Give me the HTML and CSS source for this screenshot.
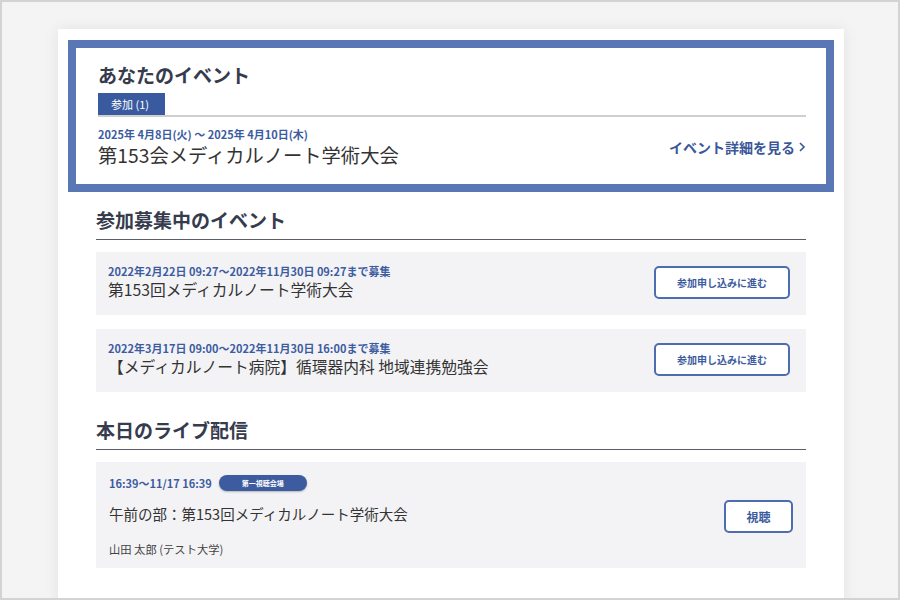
FILE: index.html
```html
<!DOCTYPE html>
<html lang="ja">
<head>
    <meta charset="UTF-8">
    <title>イベント</title>
    <link rel="stylesheet" href="styles.css">
</head>
<body>
    <div class="frame">
        <div class="card">
            <div class="my-events">
                <h2 class="my-title">あなたのイベント</h2>
                <div class="tabs">
                    <span class="tab">参加 (1)</span>
                </div>
                <div class="my-row">
                    <div>
                        <div class="date">2025年 4月8日(火) 〜 2025年 4月10日(木)</div>
                        <div class="my-name">第153会メディカルノート学術大会</div>
                    </div>
                    <a href="#" class="detail-link">イベント詳細を見る
                        <svg width="8" height="12" viewBox="0 0 8 12"><path d="M2 2l4 4-4 4" fill="none" stroke="currentColor" stroke-width="1.6"/></svg>
                    </a>
                </div>
            </div>

            <div class="section">
                <h3 class="section-title">参加募集中のイベント</h3>
                <div class="event-row">
                    <div>
                        <div class="date">2022年2月22日 09:27〜2022年11月30日 09:27まで募集</div>
                        <div class="event-name">第153回メディカルノート学術大会</div>
                    </div>
                    <button class="btn btn-apply">参加申し込みに進む</button>
                </div>
                <div class="event-row">
                    <div>
                        <div class="date">2022年3月17日 09:00〜2022年11月30日 16:00まで募集</div>
                        <div class="event-name">【メディカルノート病院】循環器内科 地域連携勉強会</div>
                    </div>
                    <button class="btn btn-apply">参加申し込みに進む</button>
                </div>
            </div>

            <div class="section live">
                <h3 class="section-title">本日のライブ配信</h3>
                <div class="live-row">
                    <div>
                        <div class="live-time">
                            <span class="date">16:39〜11/17 16:39</span>
                            <span class="badge">第一視聴会場</span>
                        </div>
                        <div class="live-name">午前の部：第153回メディカルノート学術大会</div>
                        <div class="speaker">山田 太郎 (テスト大学)</div>
                    </div>
                    <button class="btn btn-watch">視聴</button>
                </div>
            </div>
        </div>
    </div>
</body>
</html>
```

FILE: styles.css
```css
body {
    margin: 0;
    font-family: "Noto Sans CJK JP", "Noto Sans", sans-serif;
    color: #333;
}

.frame {
    box-sizing: border-box;
    height: 600px;
    overflow: hidden;
    background-color: #f4f4f4;
    border: 2px solid #d3d3d3;
    padding-top: 27px;
}

.card {
    width: 786px;
    margin-left: 56px;
    background-color: white;
    padding: 11px 10px 40px;
    box-sizing: border-box;
    box-shadow: 0 0 14px rgba(0, 0, 0, 0.08);
}

.my-events {
    border: 8px solid #5a77b5;
    padding: 14px 20px 16px 22px;
}

.my-title {
    margin: 0;
    font-size: 19px;
    line-height: 26px;
    font-weight: bold;
    color: #363b4d;
}

.tabs {
    margin-top: 5px;
    border-bottom: 2px solid #cfcfcf;
    display: flex;
}

.tab {
    background-color: #3a5aa0;
    color: white;
    font-size: 11px;
    line-height: 22px;
    padding: 0 13px;
    width: 41px;
}

.my-row {
    display: flex;
    justify-content: space-between;
    align-items: center;
    margin-top: 9px;
}

.date {
    font-size: 11px;
    line-height: 16px;
    font-weight: bold;
    color: #3d5ca0;
}

.my-name {
    font-size: 19.3px;
    line-height: 26px;
    color: #333;
}

.detail-link {
    display: flex;
    align-items: center;
    gap: 3px;
    color: #3a5797;
    font-size: 14px;
    font-weight: bold;
    text-decoration: none;
}

.section {
    margin: 15px 28px 0;
}

.live {
    margin-top: 25px;
}

.section-title {
    margin: 0;
    font-size: 19px;
    line-height: 26px;
    font-weight: bold;
    color: #363b4d;
    padding-bottom: 6px;
    border-bottom: 1px solid #5a5d68;
}

.event-row {
    display: flex;
    justify-content: space-between;
    align-items: center;
    background-color: #f3f3f6;
    padding: 11px 16px 14px 12px;
    margin-top: 12px;
}

.event-row + .event-row {
    margin-top: 14px;
}

.event-name {
    font-size: 15.75px;
    line-height: 22px;
    color: #333;
}

.btn {
    background-color: white;
    border: 2px solid #4e6db0;
    border-radius: 5px;
    color: #3d5ca0;
    font-family: inherit;
    font-weight: bold;
    cursor: pointer;
}

.btn-apply {
    width: 136px;
    height: 33px;
    font-size: 10px;
}

.btn-watch {
    width: 69px;
    height: 33px;
    font-size: 12px;
}

.live-row {
    display: flex;
    justify-content: space-between;
    align-items: center;
    background-color: #f3f3f6;
    padding: 13px 13px 11px 13px;
    margin-top: 12px;
}

.live-time {
    display: flex;
    align-items: center;
    gap: 7px;
    height: 16px;
}

.badge {
    background-color: #3d5ca0;
    color: white;
    font-size: 7px;
    font-weight: bold;
    line-height: 16px;
    width: 88px;
    text-align: center;
    border-radius: 8px;
    box-shadow: 0 1px 2px rgba(0, 0, 0, 0.25);
}

.live-name {
    margin-top: 12px;
    font-size: 14.5px;
    line-height: 22px;
    color: #333;
}

.speaker {
    margin-top: 16px;
    font-size: 11.3px;
    line-height: 16px;
    color: #444;
}
```
